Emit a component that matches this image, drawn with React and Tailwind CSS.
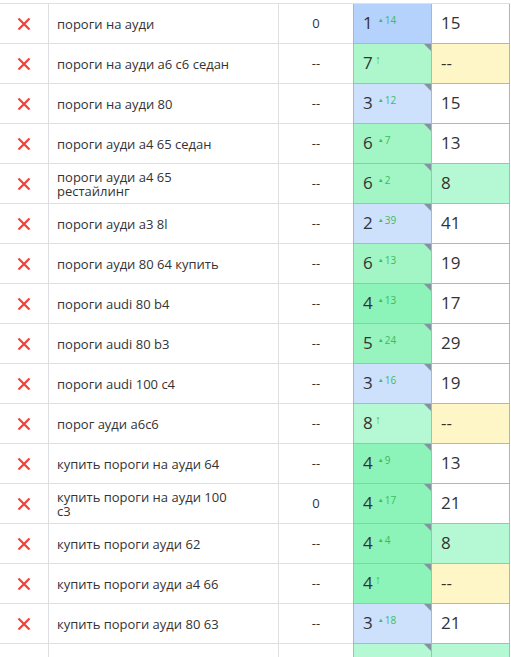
const rows = [
  { kw: "пороги на ауди", val: "0", pos: 1, d: "14", posBg: "bg-[#b4d2fc]", last: "15", lastBg: "bg-white", tri: false },
  { kw: "пороги на ауди а6 с6 седан", val: "--", pos: 7, d: "new", posBg: "bg-[#aef7cd]", last: "--", lastBg: "bg-[#fff6c8]", tri: true },
  { kw: "пороги на ауди 80", val: "--", pos: 3, d: "12", posBg: "bg-[#cde1fc]", last: "15", lastBg: "bg-white", tri: true },
  { kw: "пороги ауди а4 65 седан", val: "--", pos: 6, d: "7", posBg: "bg-[#a2f5c5]", last: "13", lastBg: "bg-white", tri: true },
  { kw: "пороги ауди а4 65 рестайлинг", val: "--", pos: 6, d: "2", posBg: "bg-[#a2f5c5]", last: "8", lastBg: "bg-[#b5f8d4]", tri: true },
  { kw: "пороги ауди а3 8l", val: "--", pos: 2, d: "39", posBg: "bg-[#cde1fc]", last: "41", lastBg: "bg-white", tri: true },
  { kw: "пороги ауди 80 64 купить", val: "--", pos: 6, d: "13", posBg: "bg-[#a2f5c5]", last: "19", lastBg: "bg-white", tri: true },
  { kw: "пороги audi 80 b4", val: "--", pos: 4, d: "13", posBg: "bg-[#8cf3b9]", last: "17", lastBg: "bg-white", tri: true },
  { kw: "пороги audi 80 b3", val: "--", pos: 5, d: "24", posBg: "bg-[#97f4bf]", last: "29", lastBg: "bg-white", tri: true },
  { kw: "пороги audi 100 c4", val: "--", pos: 3, d: "16", posBg: "bg-[#cde1fc]", last: "19", lastBg: "bg-white", tri: true },
  { kw: "порог ауди а6с6", val: "--", pos: 8, d: "new", posBg: "bg-[#b5f8d4]", last: "--", lastBg: "bg-[#fff6c8]", tri: true },
  { kw: "купить пороги на ауди 64", val: "--", pos: 4, d: "9", posBg: "bg-[#8cf3b9]", last: "13", lastBg: "bg-white", tri: true },
  { kw: "купить пороги на ауди 100 с3", val: "0", pos: 4, d: "17", posBg: "bg-[#8cf3b9]", last: "21", lastBg: "bg-white", tri: true },
  { kw: "купить пороги ауди 62", val: "--", pos: 4, d: "4", posBg: "bg-[#8cf3b9]", last: "8", lastBg: "bg-[#b5f8d4]", tri: true },
  { kw: "купить пороги ауди а4 66", val: "--", pos: 4, d: "new", posBg: "bg-[#8cf3b9]", last: "--", lastBg: "bg-[#fff6c8]", tri: true },
  { kw: "купить пороги ауди 80 63", val: "--", pos: 3, d: "18", posBg: "bg-[#cde1fc]", last: "21", lastBg: "bg-white", tri: true },
];

const Cross = () => (
  <svg width="14" height="14" viewBox="0 0 14 14">
    <path d="M1.5 1.5 L12.5 12.5 M12.5 1.5 L1.5 12.5" stroke="#f0413a" strokeWidth="2.2" strokeLinecap="butt" />
  </svg>
);

const Row = ({ r }) => (
  <div className="flex h-[40px]">
    <div className="w-[49px] flex items-center justify-center border-r border-b border-[#dedfe3]">
      {r && <Cross />}
    </div>
    <div className="w-[230px] flex items-center pl-2 border-r border-b border-[#dedfe3]">
      {r && <span className="max-w-[180px] text-[13px] leading-[14px] text-[#333]">{r.kw}</span>}
    </div>
    <div className="w-[74px] flex items-center justify-center border-b border-[#dedfe3] text-[13px] text-[#333]">
      {r && r.val}
    </div>
    <div className={`relative w-[79px] flex items-center pl-[9px] pb-[2px] border-l border-r border-b border-[#a9b7cb] ${r ? r.posBg : "bg-[#b5f8d4]"}`}>
      {(!r || r.tri) && (
        <div className="absolute top-0 right-0 w-0 h-0 border-t-[7px] border-l-[7px] border-t-[#83939f] border-l-transparent" />
      )}
      {r && (
        <>
          <span className="text-[17px] text-[#333] leading-none">{r.pos}</span>
          {r.d === "new" ? (
            <span className="self-start mt-[10px] ml-[2px] text-[12px] leading-none text-[#3dbb5e]">↑</span>
          ) : (
            <span className="self-start mt-[11px] ml-[5px] text-[10px] leading-none text-[#3dbb5e]">
              <span className="text-[6px] align-[2px] mr-[1px]">▲</span>{r.d}
            </span>
          )}
        </>
      )}
    </div>
    <div className={`w-[78px] flex items-center pl-[9px] pb-[2px] border-r border-b border-[#a9b7cb] text-[17px] text-[#333] ${r ? r.lastBg : "bg-[#b5f8d4]"}`}>
      {r && r.last}
    </div>
  </div>
);

export default function App() {
  return (
    <div className="w-[511px] h-[657px] overflow-hidden bg-white" style={{ fontFamily: "'Open Sans', sans-serif" }}>
      <div className="h-[3px] border-b border-[#dedfe3] w-[510px] box-content" />
      {rows.map((r, i) => (
        <Row key={i} r={r} />
      ))}
      <Row r={null} />
    </div>
  );
}
